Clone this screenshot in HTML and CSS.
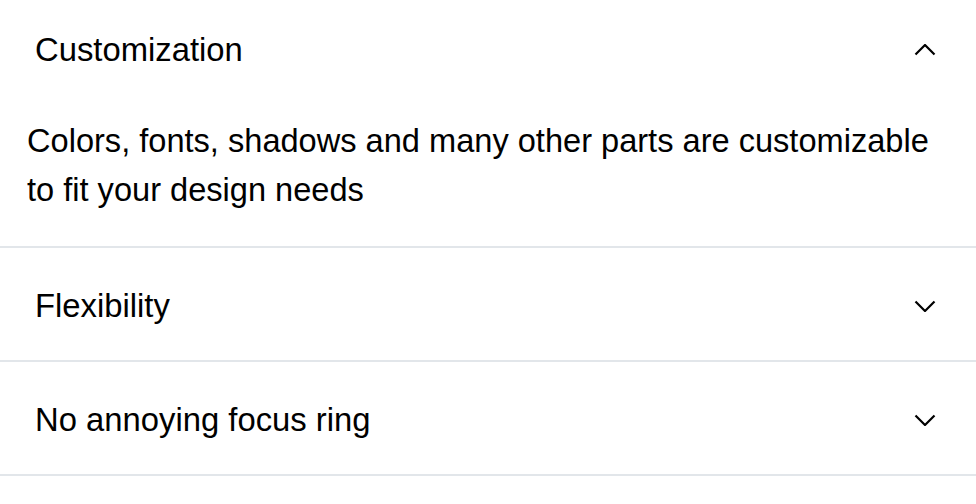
FILE: index.html
```html
<!DOCTYPE html>
<html>
<head>
<meta charset="utf-8">
<link rel="stylesheet" href="styles.css">
</head>
<body>
<div class="accordion">
  <div class="item">
    <button class="trigger">
      <span class="title">Customization</span>
      <svg class="chev" width="22" height="12" viewBox="0 0 22 12"><polyline points="1.5,10.5 11,1 20.5,10.5" /></svg>
    </button>
    <div class="panel">Colors, fonts, shadows and many other parts are customizable to fit your design needs</div>
  </div>
  <div class="item">
    <button class="trigger">
      <span class="title">Flexibility</span>
      <svg class="chev" width="22" height="12" viewBox="0 0 22 12"><polyline points="1.5,1.5 11,11 20.5,1.5" /></svg>
    </button>
  </div>
  <div class="item">
    <button class="trigger">
      <span class="title">No annoying focus ring</span>
      <svg class="chev" width="22" height="12" viewBox="0 0 22 12"><polyline points="1.5,1.5 11,11 20.5,1.5" /></svg>
    </button>
  </div>
</div>
</body>
</html>
```
FILE: styles.css
```css
html, body {
  margin: 0;
  padding: 0;
  background: #fff;
}
body {
  font-family: "Liberation Sans", Arial, sans-serif;
  color: #000;
}
.accordion {
  margin-top: -8px;
  display: flex;
  flex-direction: column;
}
.item {
  border-bottom: 2px solid #e2e6ea;
}
.trigger {
  display: flex;
  align-items: center;
  justify-content: space-between;
  width: 100%;
  height: 112px;
  padding: 4px 40px 0 35px;
  border: 0;
  background: none;
  font: inherit;
  font-size: 32.8px;
  color: #000;
  text-align: left;
  cursor: pointer;
}
.chev {
  display: block;
  fill: none;
  stroke: #000;
  stroke-width: 2.2;
}
.panel {
  font-size: 32.6px;
  line-height: 49px;
  padding: 12px 40px 32px 27px;
}
```
